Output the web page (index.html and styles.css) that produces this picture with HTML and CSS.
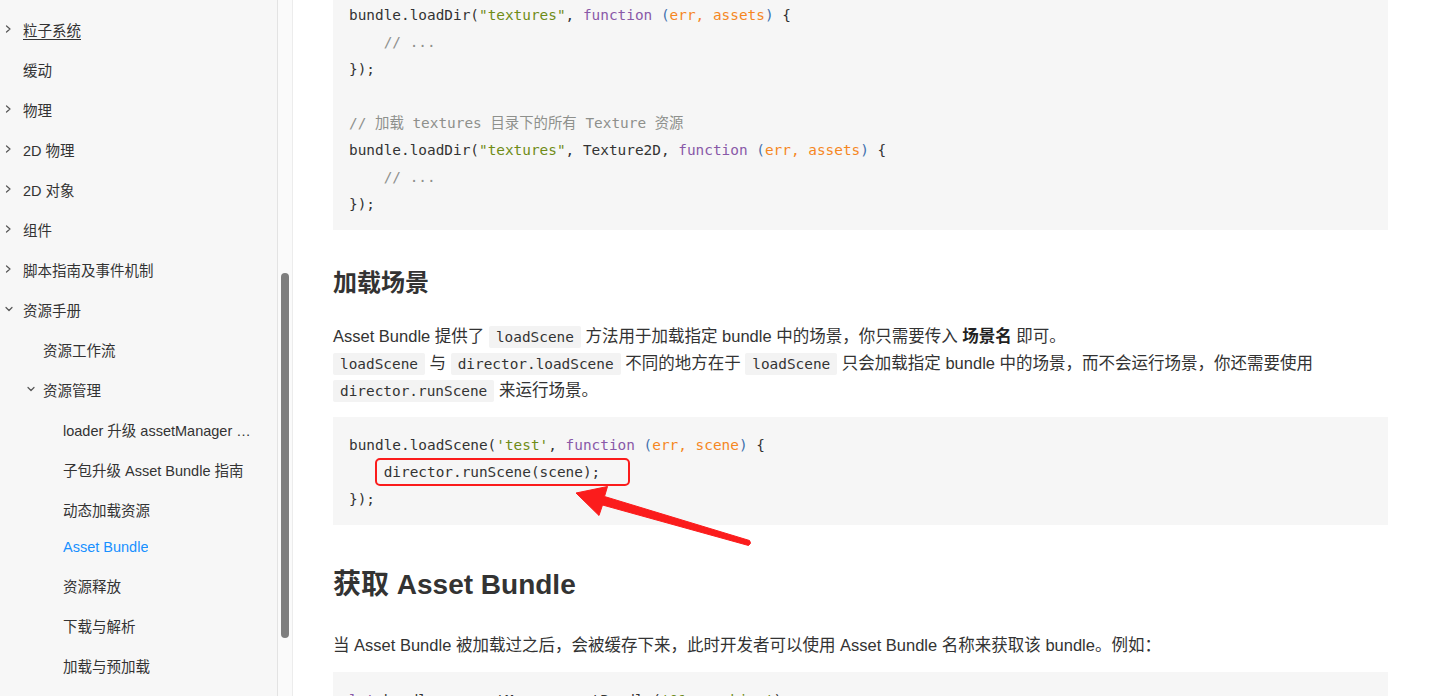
FILE: index.html
```html
<!DOCTYPE html>
<html lang="zh-CN">
<head>
<meta charset="utf-8">
<title>Asset Bundle</title>
<link rel="stylesheet" href="styles.css">
</head>
<body>
<div class="layout">
  <aside class="sidebar">
    <ul class="nav">
      <li class="item lv1 hover"><span class="chev"><svg width="7" height="8" viewBox="0 0 7 8"><path d="M1.5 1 L5 4 L1.5 7" /></svg></span><span class="label">粒子系统</span></li>
      <li class="item lv1 leaf"><span class="label">缓动</span></li>
      <li class="item lv1"><span class="chev"><svg width="7" height="8" viewBox="0 0 7 8"><path d="M1.5 1 L5 4 L1.5 7" /></svg></span><span class="label">物理</span></li>
      <li class="item lv1"><span class="chev"><svg width="7" height="8" viewBox="0 0 7 8"><path d="M1.5 1 L5 4 L1.5 7" /></svg></span><span class="label">2D 物理</span></li>
      <li class="item lv1"><span class="chev"><svg width="7" height="8" viewBox="0 0 7 8"><path d="M1.5 1 L5 4 L1.5 7" /></svg></span><span class="label">2D 对象</span></li>
      <li class="item lv1"><span class="chev"><svg width="7" height="8" viewBox="0 0 7 8"><path d="M1.5 1 L5 4 L1.5 7" /></svg></span><span class="label">组件</span></li>
      <li class="item lv1"><span class="chev"><svg width="7" height="8" viewBox="0 0 7 8"><path d="M1.5 1 L5 4 L1.5 7" /></svg></span><span class="label">脚本指南及事件机制</span></li>
      <li class="item lv1"><span class="chev"><svg width="8" height="6" viewBox="0 0 8 6"><path d="M1 1.5 L4 4.5 L7 1.5" /></svg></span><span class="label">资源手册</span></li>
      <li class="item lv2 leaf"><span class="label">资源工作流</span></li>
      <li class="item lv2"><span class="chev"><svg width="8" height="6" viewBox="0 0 8 6"><path d="M1 1.5 L4 4.5 L7 1.5" /></svg></span><span class="label">资源管理</span></li>
      <li class="item lv3 leaf"><span class="label">loader 升级 assetManager 指南</span></li>
      <li class="item lv3 leaf"><span class="label">子包升级 Asset Bundle 指南</span></li>
      <li class="item lv3 leaf"><span class="label">动态加载资源</span></li>
      <li class="item lv3 leaf active"><span class="label">Asset Bundle</span></li>
      <li class="item lv3 leaf"><span class="label">资源释放</span></li>
      <li class="item lv3 leaf"><span class="label">下载与解析</span></li>
      <li class="item lv3 leaf"><span class="label">加载与预加载</span></li>
    </ul>
  </aside>
  <div class="track"><div class="thumb"></div></div>
  <main class="main">
    <div class="content">
<pre class="code">bundle.loadDir(<span class="s">"textures"</span>, <span class="k">function</span> <span class="p">(</span><span class="o">err, assets</span><span class="p">)</span> {
    <span class="c">// ...</span>
});

<span class="c">// 加载 textures 目录下的所有 Texture 资源</span>
bundle.loadDir(<span class="s">"textures"</span>, Texture2D, <span class="k">function</span> <span class="p">(</span><span class="o">err, assets</span><span class="p">)</span> {
    <span class="c">// ...</span>
});</pre>

      <h3 class="h3">加载场景</h3>
      <p class="para">Asset Bundle 提供了 <code class="ic">loadScene</code> 方法用于加载指定 bundle 中的场景，你只需要传入 <strong>场景名</strong> 即可。<br><code class="ic">loadScene</code> 与 <code class="ic">director.loadScene</code> 不同的地方在于 <code class="ic">loadScene</code> 只会加载指定 bundle 中的场景，而不会运行场景，你还需要使用 <code class="ic">director.runScene</code> 来运行场景。</p>

      <div class="annotated">
<pre class="code">bundle.loadScene(<span class="s">'test'</span>, <span class="k">function</span> <span class="p">(</span><span class="o">err, scene</span><span class="p">)</span> {
    director.runScene(scene);
});</pre>
        <div class="mark-box"></div>
        <svg class="mark-arrow" width="200" height="80" viewBox="0 0 200 80">
          <path d="M13 17 L44.5 10.5 L41.5 20.5 L186.5 64.5 Q189 67.5 185.5 69.5 L39.5 29 L36 39.5 Z" />
        </svg>
      </div>

      <h2 class="h2">获取 Asset Bundle</h2>
      <p class="para">当 Asset Bundle 被加载过之后，会被缓存下来，此时开发者可以使用 Asset Bundle 名称来获取该 bundle。例如：</p>

<pre class="code"><span class="k">let</span> bundle = assetManager.getBundle(<span class="s">'01_graphics'</span>);</pre>
    </div>
  </main>
</div>
</body>
</html>
```
FILE: styles.css
```css
html, body {
  margin: 0;
  padding: 0;
  height: 696px;
  overflow: hidden;
  background: #ffffff;
}

body {
  font-family: "Liberation Sans", "Noto Sans CJK SC", sans-serif;
  color: #333333;
}

.layout {
  display: flex;
  height: 696px;
}

/* ---------- sidebar ---------- */
.sidebar {
  width: 277px;
  flex: none;
  background: #f7f7f7;
  border-right: 1px solid #e3e3e3;
  overflow: hidden;
}

.nav {
  list-style: none;
  margin: 0;
  padding: 9px 0 0 0;
}

.item {
  display: flex;
  align-items: center;
  height: 40px;
  font-size: 14.5px;
  color: #333333;
  padding-right: 20px;
  white-space: nowrap;
}

.item.lv1 { padding-left: 5px; }
.item.lv1.leaf { padding-left: 23px; }
.item.lv2 { padding-left: 27px; }
.item.lv2.leaf { padding-left: 43px; }
.item.lv3 { padding-left: 63px; }

.chev {
  width: 18px;
  flex: none;
  display: flex;
  align-items: center;
}
.item.lv2 .chev { width: 16px; }

.chev svg path {
  fill: none;
  stroke: #555555;
  stroke-width: 1.2;
  stroke-linecap: round;
  stroke-linejoin: round;
}

.label {
  overflow: hidden;
  text-overflow: ellipsis;
  white-space: nowrap;
  min-width: 0;
}

.item.hover .label {
  text-decoration: underline;
  text-underline-offset: 3px;
}

.item.active {
  height: 36px;
  color: #1890ff;
}

/* fake scrollbar */
.track {
  width: 14px;
  flex: none;
  background: #fafafa;
  border-right: 1px solid #ececec;
}

.thumb {
  margin: 273px 0 0 3px;
  width: 8px;
  height: 365px;
  border-radius: 4px;
  background: #7e7e7e;
}

/* ---------- main ---------- */
.main {
  flex: 1;
  min-width: 0;
  padding: 0 44px 0 40px;
  overflow: hidden;
}

.content {
  margin-top: -13px;
}

.code {
  margin: 0;
  padding: 15px 16px 12px;
  background: #f6f6f6;
  font-family: "DejaVu Sans Mono", "Noto Sans CJK SC", monospace;
  font-size: 14.4px;
  line-height: 27px;
  color: #333333;
  white-space: pre;
}

.code .s { color: #6f8c16; }
.code .k { color: #8959a8; }
.code .p { color: #4271ae; }
.code .o { color: #f5871f; }
.code .c { color: #8e908c; }

.h3 {
  margin: 38px 0 25px;
  font-size: 24px;
  line-height: 30px;
  font-weight: bold;
  color: #333333;
}

.h2 {
  margin: 42px 0 30px;
  font-size: 28px;
  line-height: 35px;
  font-weight: bold;
  color: #333333;
}

.para {
  margin: 0 0 13px;
  font-size: 16.5px;
  line-height: 27px;
  color: #333333;
}

.para strong {
  font-weight: bold;
  color: #222222;
}

.ic {
  font-family: "DejaVu Sans Mono", monospace;
  font-size: 14.4px;
  line-height: 1;
  background: #f3f3f3;
  padding: 3px 7px;
  border-radius: 2px;
  color: #333333;
}

/* ---------- annotation overlay ---------- */
.annotated {
  position: relative;
}

.mark-box {
  position: absolute;
  left: 42px;
  top: 41px;
  width: 251px;
  height: 24px;
  border: 2.5px solid #fb1c1c;
  border-radius: 5px;
}

.mark-arrow {
  position: absolute;
  left: 230px;
  top: 59px;
  overflow: visible;
}

.mark-arrow path {
  fill: #fb1c1c;
  stroke: #fb1c1c;
  stroke-width: 1;
  stroke-linejoin: round;
}
```
